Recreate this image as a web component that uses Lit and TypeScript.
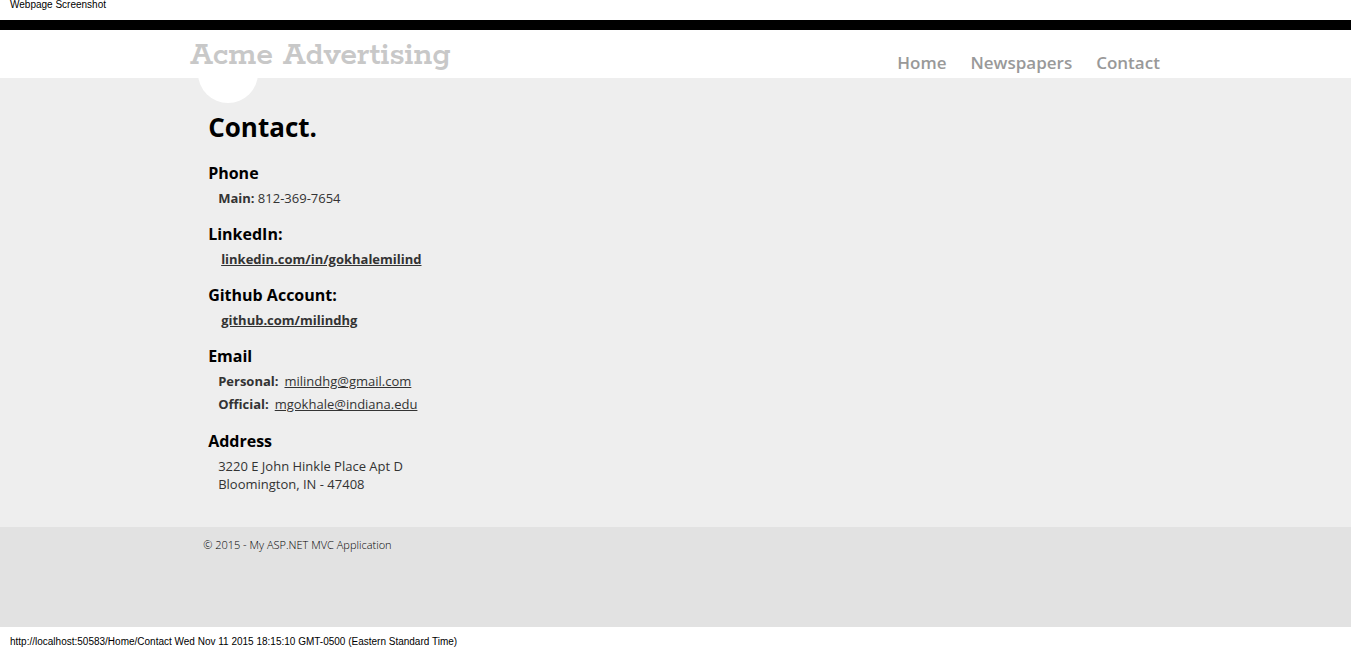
import { LitElement, html, css } from "lit";
import { customElement } from "lit/decorators.js";

@customElement("app-root")
class AppRoot extends LitElement {
  static styles = css`
    :host {
      display: block;
      background: #fff;
      color: #333;
      font-family: "Open Sans", "Noto Sans", sans-serif;
      font-size: 13px;
      font-weight: 400;
      line-height: 18px;
    }
    .print {
      height: 20px;
      padding: 0 10px;
      box-sizing: border-box;
      font: 10px/10px "Liberation Sans", Arial, sans-serif;
      color: #000;
    }
    .print.end { padding-top: 10px; }
    header { border-top: 10px solid #000; }
    .wrap {
      width: 72%;
      margin: 0 auto;
      padding: 0 2px 0 1px;
      box-sizing: border-box;
      display: flex;
      justify-content: space-between;
      height: 48px;
    }
    .logo {
      position: relative;
      color: #c8c8c8;
      font: 600 34px/52px Rockwell, "Rokkitt", "DejaVu Serif", serif;
      text-decoration: none;
      white-space: nowrap;
    }
    .dot {
      position: absolute;
      left: 8px;
      top: 13px;
      width: 60px;
      height: 60px;
      border-radius: 50%;
      background: #fff;
    }
    .name { position: relative; }
    nav { display: flex; gap: 24px; padding: 21px 0 0; }
    nav a {
      color: #999;
      font-size: 17px;
      line-height: 24px;
      font-weight: 600;
      text-decoration: none;
    }
    main { background: #eee; padding: 30px 0 34px; }
    .content { width: 72%; margin: 0 auto; padding-left: 19px; box-sizing: border-box; }
    h1, h2, p { margin: 0; }
    h1 { color: #000; font-size: 26px; line-height: 38px; font-weight: 700; }
    h2 { color: #000; font-size: 16px; line-height: 20px; font-weight: 700; }
    section { margin-top: 17px; }
    p { padding: 6px 10px 0; }
    p + p { padding-top: 5px; }
    p.pair { display: flex; gap: 6px; }
    p.pair:last-child { padding-bottom: 1px; }
    p.link { padding-left: 13px; }
    p a { color: #333; }
    b { font-weight: 700; }
    footer { background: #e2e2e2; height: 100px; font-size: 11px; font-weight: 300; color: #000; }
    .copy { width: 72%; margin: 0 auto; padding: 9px 14px; box-sizing: border-box; }
  `;
  render() {
    return html`
      <div class="print">Webpage Screenshot</div>
      <header>
        <div class="wrap">
          <a class="logo" href="#"><span class="dot"></span><span class="name">Acme Advertising</span></a>
          <nav><a href="#">Home</a><a href="#">Newspapers</a><a href="#">Contact</a></nav>
        </div>
      </header>
      <main>
        <div class="content">
          <h1>Contact.</h1>
          <section><h2>Phone</h2><p><b>Main:</b> 812-369-7654</p></section>
          <section><h2>LinkedIn:</h2><p class="link"><a href="#"><b>linkedin.com/in/gokhalemilind</b></a></p></section>
          <section><h2>Github Account:</h2><p class="link"><a href="#"><b>github.com/milindhg</b></a></p></section>
          <section><h2>Email</h2>
            <p class="pair"><b>Personal:</b> <a href="#">milindhg@gmail.com</a></p>
            <p class="pair"><b>Official:</b> <a href="#">mgokhale@indiana.edu</a></p>
          </section>
          <section><h2>Address</h2><p>3220 E John Hinkle Place Apt D<br />Bloomington, IN - 47408</p></section>
        </div>
      </main>
      <footer><div class="copy">© 2015 - My ASP.NET MVC Application</div></footer>
      <div class="print end">http://localhost:50583/Home/Contact Wed Nov 11 2015 18:15:10 GMT-0500 (Eastern Standard Time)</div>
    `;
  }
}
